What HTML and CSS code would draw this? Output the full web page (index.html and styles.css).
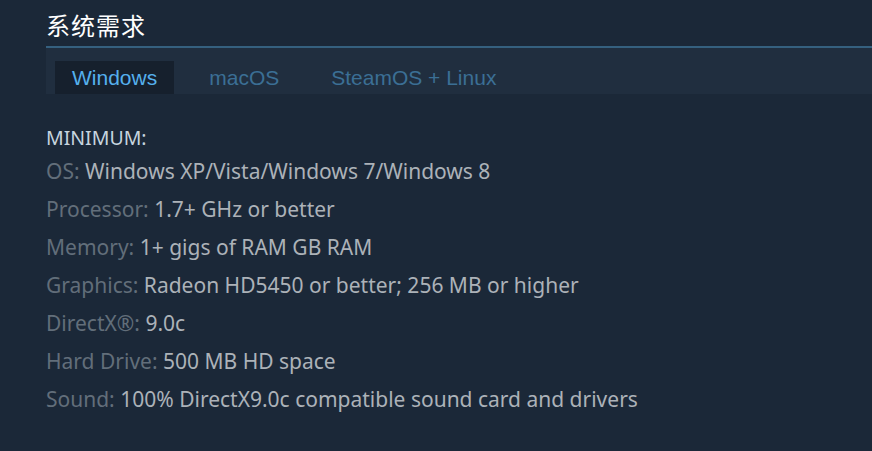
FILE: index.html
```html
<!DOCTYPE html>
<html lang="zh">
<head>
    <meta charset="UTF-8">
    <meta name="viewport" content="width=device-width, initial-scale=1.0">
    <title>系统需求</title>
    <link rel="stylesheet" href="styles.css">
</head>
<body>

<div class="sysreq">
    <h2>系统需求</h2>
    <div class="tabs">
        <div class="tab active">Windows</div>
        <div class="tab">macOS</div>
        <div class="tab">SteamOS + Linux</div>
    </div>

    <div class="req-block">
        <div class="req-title">MINIMUM:</div>
        <ul>
            <li><span class="lbl">OS:</span> Windows XP/Vista/Windows 7/Windows 8</li>
            <li><span class="lbl">Processor:</span> 1.7+ GHz or better</li>
            <li><span class="lbl">Memory:</span> 1+ gigs of RAM GB RAM</li>
            <li><span class="lbl">Graphics:</span> Radeon HD5450 or better; 256 MB or higher</li>
            <li><span class="lbl">DirectX®:</span> 9.0c</li>
            <li><span class="lbl">Hard Drive:</span> 500 MB HD space</li>
            <li><span class="lbl">Sound:</span> 100% DirectX9.0c compatible sound card and drivers</li>
        </ul>
    </div>
</div>

</body>
</html>
```

FILE: styles.css
```css
body {
    margin: 0;
    background: #1b2838;
    font-family: 'Noto Sans', sans-serif;
    color: #acb2b8;
}
.sysreq {
    padding: 11px 0 0 46px;
}
h2 {
    margin: 0;
    padding-bottom: 7px;
    font-family: 'Noto Sans CJK SC', sans-serif;
    font-size: 24px;
    font-weight: normal;
    line-height: 28px;
    color: #fff;
    letter-spacing: 1px;
    border-bottom: 2px solid #35607f;
}
.tabs {
    display: flex;
    gap: 18px;
    padding: 13px 0 0 9px;
    background: #202e3f;
    height: 33px;
}
.tab {
    font-family: 'Liberation Sans', Arial, sans-serif;
    font-size: 21px;
    line-height: 33px;
    padding: 0 17px;
    color: #3b6f95;
}
.tab.active {
    background: #16202d;
    color: #55b0ee;
}
.req-block {
    padding-top: 32px;
}
.req-title {
    font-size: 19.5px;
    line-height: 24px;
    color: #c6d4df;
    margin-bottom: 2px;
}
ul {
    list-style: none;
    margin: 0;
    padding: 0;
}
li {
    font-size: 21px;
    line-height: 38px;
}
.lbl {
    color: #626e7a;
}
```
